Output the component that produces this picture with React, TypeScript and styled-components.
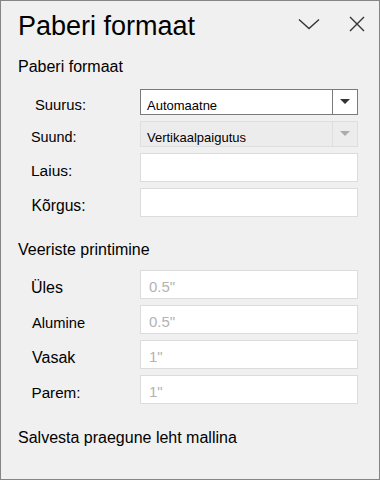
import styled, { createGlobalStyle } from "styled-components";

const GlobalStyle = createGlobalStyle`
    * {
        box-sizing: border-box;
    }
    body {
        margin: 0;
        background: #f0f0f0;
        font-family: "Liberation Sans", Arial, sans-serif;
    }
`;

const Panel = styled.div`
    width: 380px;
    height: 480px;
    background: #f0f0f0;
    border: 1px solid #858585;
    color: #111;
    padding: 0 21px 0 17px;
`;

const Header = styled.header`
    display: flex;
    align-items: center;
    height: 32px;
    margin-top: 9px;
`;

const Title = styled.h1`
    flex: 1;
    margin: 0;
    font-size: 27px;
    font-weight: 400;
    line-height: 32px;
    color: #000;
`;

const HeaderIcons = styled.div`
    display: flex;
    align-items: center;
    gap: 29px;
    padding-bottom: 4px;
    margin-right: -7px;
`;

const IconButton = styled.button`
    display: flex;
    align-items: center;
    justify-content: center;
    padding: 0;
    border: none;
    background: none;
    color: #333;
`;

const SectionTitle = styled.h2<{ $top: number }>`
    margin: ${(p) => p.$top}px 0 0;
    font-size: 16px;
    font-weight: 400;
    line-height: 20px;
    color: #000;
`;

const Fields = styled.div<{ $top: number }>`
    display: flex;
    flex-direction: column;
    gap: 6px;
    margin-top: ${(p) => p.$top}px;
`;

const Row = styled.div<{ $h: number }>`
    display: flex;
    align-items: center;
    height: ${(p) => p.$h}px;
`;

const Label = styled.label<{ $size: number; $indent: number }>`
    flex: 0 0 122px;
    padding-left: ${(p) => p.$indent}px;
    padding-top: 6px;
    font-size: ${(p) => p.$size}px;
    color: #000;
    white-space: nowrap;
`;

const Select = styled.div<{ $disabled?: boolean }>`
    display: flex;
    width: 218px;
    height: 100%;
    background: ${(p) => (p.$disabled ? "#ececec" : "#fff")};
    border: 1px solid ${(p) => (p.$disabled ? "#dedede" : "#7a7a7a")};
`;

const SelectValue = styled.div`
    flex: 1;
    display: flex;
    align-items: center;
    padding: 6px 0 0 6px;
    font-size: 13px;
    color: #000;
`;

const SelectArrow = styled.div<{ $disabled?: boolean }>`
    flex: 0 0 25px;
    display: flex;
    align-items: center;
    justify-content: center;
    padding-bottom: 1px;
    border-left: 1px solid ${(p) => (p.$disabled ? "#dedede" : "#7a7a7a")};
    &::after {
        content: "";
        border-left: 5px solid transparent;
        border-right: 5px solid transparent;
        border-top: 5px solid ${(p) => (p.$disabled ? "#ababab" : "#333")};
    }
`;

const Input = styled.div`
    display: flex;
    align-items: center;
    width: 218px;
    height: 100%;
    background: #fff;
    border: 1px solid #dcdcdc;
    padding: 4px 0 0 8px;
    font-size: 15px;
    color: #b3b3b3;
`;

const Footer = styled.p`
    margin: 24px 0 0;
    font-size: 16px;
    line-height: 20px;
    color: #000;
`;

const sizeFields = [
    { label: "Laius:", size: 15.5, indent: 13 },
    { label: "Kõrgus:", size: 15.7, indent: 13.5 },
];

const margins = [
    { label: "Üles", size: 16, indent: 13, value: "0.5\"" },
    { label: "Alumine", size: 14.7, indent: 14, value: "0.5\"" },
    { label: "Vasak", size: 16, indent: 14, value: "1\"" },
    { label: "Parem:", size: 15.2, indent: 13.5, value: "1\"" },
];

const App = () => {
    return (
        <>
            <GlobalStyle />
            <Panel>
                <Header>
                    <Title>Paberi formaat</Title>
                    <HeaderIcons>
                        <IconButton aria-label="Ahenda">
                            <svg width="22" height="12" viewBox="0 0 22 12">
                                <polyline
                                    points="1,1.5 11,10.5 21,1.5"
                                    fill="none"
                                    stroke="currentColor"
                                    strokeWidth="1.4"
                                />
                            </svg>
                        </IconButton>
                        <IconButton aria-label="Sulge">
                            <svg width="16" height="16" viewBox="0 0 16 16">
                                <path
                                    d="M1 1 L15 15 M15 1 L1 15"
                                    stroke="currentColor"
                                    strokeWidth="1.4"
                                />
                            </svg>
                        </IconButton>
                    </HeaderIcons>
                </Header>

                <SectionTitle $top={15}>Paberi formaat</SectionTitle>
                <Fields $top={12}>
                    <Row $h={26}>
                        <Label $size={14.8} $indent={17}>Suurus:</Label>
                        <Select>
                            <SelectValue>Automaatne</SelectValue>
                            <SelectArrow />
                        </Select>
                    </Row>
                    <Row $h={26}>
                        <Label $size={14.4} $indent={13}>Suund:</Label>
                        <Select $disabled>
                            <SelectValue>Vertikaalpaigutus</SelectValue>
                            <SelectArrow $disabled />
                        </Select>
                    </Row>
                    {sizeFields.map((f) => (
                        <Row key={f.label} $h={29}>
                            <Label $size={f.size} $indent={f.indent}>{f.label}</Label>
                            <Input />
                        </Row>
                    ))}
                </Fields>

                <SectionTitle $top={23}>Veeriste printimine</SectionTitle>
                <Fields $top={10}>
                    {margins.map((m) => (
                        <Row key={m.label} $h={29}>
                            <Label $size={m.size} $indent={m.indent}>{m.label}</Label>
                            <Input>{m.value}</Input>
                        </Row>
                    ))}
                </Fields>

                <Footer>Salvesta praegune leht mallina</Footer>
            </Panel>
        </>
    );
};

export default App;
